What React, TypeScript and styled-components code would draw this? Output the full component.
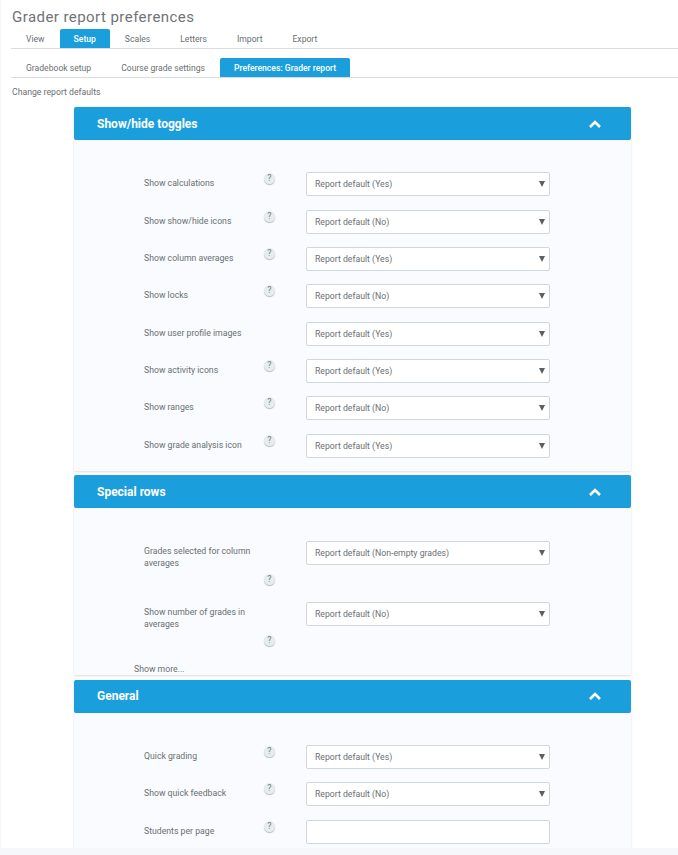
import styled, {createGlobalStyle} from "styled-components";

const GlobalStyle = createGlobalStyle`
  html, body {
    margin: 0;
    padding: 0;
    background: #f5f7fb;
    font-family: Roboto, "Liberation Sans", sans-serif;
    color: #6a6f73;
  }
`;

const Page = styled.div`
  height: 848px;
  margin-left: 1px;
  padding-left: 10px;
  background: #fff;
  overflow: hidden;
`;

const Title = styled.h1`
  margin: 0;
  padding: 8px 0 0 1px;
  height: 21px;
  font-size: 15px;
  line-height: 18px;
  font-weight: 400;
  letter-spacing: 0.44px;
  color: #6f7377;
`;

const TabBar = styled.div<{$gap: number}>`
  display: flex;
  height: 19px;
  margin-bottom: ${props => props.$gap}px;
  border-bottom: 1px solid #d9dde0;
`;

const Tab = styled.div<{$active?: boolean}>`
  padding: 0 ${props => props.$active ? 14 : 15}px;
  height: 19px;
  line-height: 20px;
  font-size: 8.6px;
  font-weight: ${props => props.$active ? 500 : 400};
  color: ${props => props.$active ? "#fff" : "#6a6f73"};
  background: ${props => props.$active ? "#1a9fdc" : "transparent"};
  border-radius: 2px 2px 0 0;
`;

const Intro = styled.p`
  margin: 0 0 9px;
  padding-left: 1px;
  height: 12px;
  font-size: 8.7px;
  line-height: 12px;
`;

const Section = styled.section<{$after: number}>`
  width: 557px;
  margin: 0 0 ${props => props.$after}px 63px;
`;

const SectionHeader = styled.header`
  display: flex;
  justify-content: space-between;
  align-items: center;
  height: 33px;
  padding: 0 29px 0 23px;
  background: #1a9fdc;
  border-radius: 2px;
  box-shadow: 0 1px 3px rgba(0, 0, 0, 0.12);
  color: #fff;
  font-size: 12px;
  font-weight: 700;
`;

const SectionBody = styled.div<{$top: number; $bottom: number}>`
  display: flex;
  flex-direction: column;
  gap: 13.35px;
  padding: ${props => props.$top}px 0 ${props => props.$bottom}px 70px;
  background: #f9fbfe;
  box-shadow: 0 1px 2px rgba(0, 0, 0, 0.14);
`;

const Row = styled.div`
  display: grid;
  grid-template-columns: 120px 42px 244px;
  align-items: start;
`;

const FieldLabel = styled.label<{$stacked?: boolean}>`
  padding: ${props => props.$stacked ? "4px 0 1px" : "5px 0 0"};
  font-size: 8.7px;
  line-height: 12px;
`;

const HelpCell = styled.div<{$below?: boolean}>`
  grid-column: 2;
  grid-row: ${props => props.$below ? 2 : 1};
  padding-top: ${props => props.$below ? 4 : 1}px;
  padding-bottom: ${props => props.$below ? 3 : 0}px;
`;

const Help = styled.span`
  display: block;
  width: 11px;
  height: 11px;
  border-radius: 50%;
  background: #e6edef;
  box-shadow: 0 1px 1px rgba(0, 0, 0, 0.25);
  color: #767b7f;
  font-size: 9px;
  line-height: 11px;
  text-align: center;
`;

const SelectWrap = styled.div`
  grid-column: 3;
  grid-row: 1;
  position: relative;

  &::after {
    content: "";
    position: absolute;
    top: 9px;
    right: 5px;
    border-left: 3px solid transparent;
    border-right: 3px solid transparent;
    border-top: 6px solid #5b5f63;
    pointer-events: none;
  }
`;

const Select = styled.select`
  display: block;
  width: 244px;
  height: 24px;
  padding: 0 8px;
  appearance: none;
  background: #fff;
  border: 1px solid #cfd8dc;
  border-radius: 2px;
  color: #6a6f73;
  font-family: inherit;
  font-size: 8.7px;
`;

const TextInput = styled.input`
  grid-column: 3;
  grid-row: 1;
  box-sizing: border-box;
  width: 244px;
  height: 24px;
  background: #fff;
  border: 1px solid #cfd8dc;
  border-radius: 2px;
`;

const ShowMore = styled.div`
  margin: 1px 0 0 -10px;
  height: 11px;
  font-size: 8.7px;
  line-height: 12px;
`;

type Field = {
    label: string
    value?: string
    help?: boolean
    helpBelow?: boolean
}

type FormSection = {
    title: string
    fields: Field[]
    after: number
    top: number
    bottom: number
    more?: boolean
}

const sections: FormSection[] = [
    {
        title: "Show/hide toggles",
        after: 4,
        top: 32.3,
        bottom: 13.6,
        fields: [
            {label: "Show calculations", value: "Report default (Yes)", help: true},
            {label: "Show show/hide icons", value: "Report default (No)", help: true},
            {label: "Show column averages", value: "Report default (Yes)", help: true},
            {label: "Show locks", value: "Report default (No)", help: true},
            {label: "Show user profile images", value: "Report default (Yes)"},
            {label: "Show activity icons", value: "Report default (Yes)", help: true},
            {label: "Show ranges", value: "Report default (No)", help: true},
            {label: "Show grade analysis icon", value: "Report default (Yes)", help: true},
        ],
    },
    {
        title: "Special rows",
        after: 5,
        top: 33,
        bottom: 1,
        more: true,
        fields: [
            {label: "Grades selected for column averages", value: "Report default (Non-empty grades)", help: true, helpBelow: true},
            {label: "Show number of grades in averages", value: "Report default (No)", help: true, helpBelow: true},
        ],
    },
    {
        title: "General",
        after: 0,
        top: 32,
        bottom: 14,
        fields: [
            {label: "Quick grading", value: "Report default (Yes)", help: true},
            {label: "Show quick feedback", value: "Report default (No)", help: true},
            {label: "Students per page", help: true},
        ],
    },
];

function Chevron() {
    return (
        <svg width="14" height="10" viewBox="0 0 14 10" fill="none">
            <path d="M2 8 L7 3 L12 8" stroke="#fff" strokeWidth="2.6"/>
        </svg>
    );
}

export default function App() {
    return (
        <>
            <GlobalStyle/>
            <Page>
                <Title>Grader report preferences</Title>
                <TabBar $gap={9}>
                    <Tab>View</Tab>
                    <Tab $active>Setup</Tab>
                    <Tab>Scales</Tab>
                    <Tab>Letters</Tab>
                    <Tab>Import</Tab>
                    <Tab>Export</Tab>
                </TabBar>
                <TabBar $gap={8}>
                    <Tab>Gradebook setup</Tab>
                    <Tab>Course grade settings</Tab>
                    <Tab $active>Preferences: Grader report</Tab>
                </TabBar>
                <Intro>Change report defaults</Intro>
                {sections.map(section =>
                    <Section key={section.title} $after={section.after}>
                        <SectionHeader>
                            {section.title}
                            <Chevron/>
                        </SectionHeader>
                        <SectionBody $top={section.top} $bottom={section.bottom}>
                            {section.fields.map(field =>
                                <Row key={field.label}>
                                    <FieldLabel $stacked={field.helpBelow}>{field.label}</FieldLabel>
                                    {field.help &&
                                        <HelpCell $below={field.helpBelow}><Help>?</Help></HelpCell>}
                                    {field.value
                                        ? <SelectWrap>
                                            <Select defaultValue={field.value}>
                                                <option>{field.value}</option>
                                            </Select>
                                        </SelectWrap>
                                        : <TextInput/>}
                                </Row>
                            )}
                            {section.more && <ShowMore>Show more...</ShowMore>}
                        </SectionBody>
                    </Section>
                )}
            </Page>
        </>
    );
}
